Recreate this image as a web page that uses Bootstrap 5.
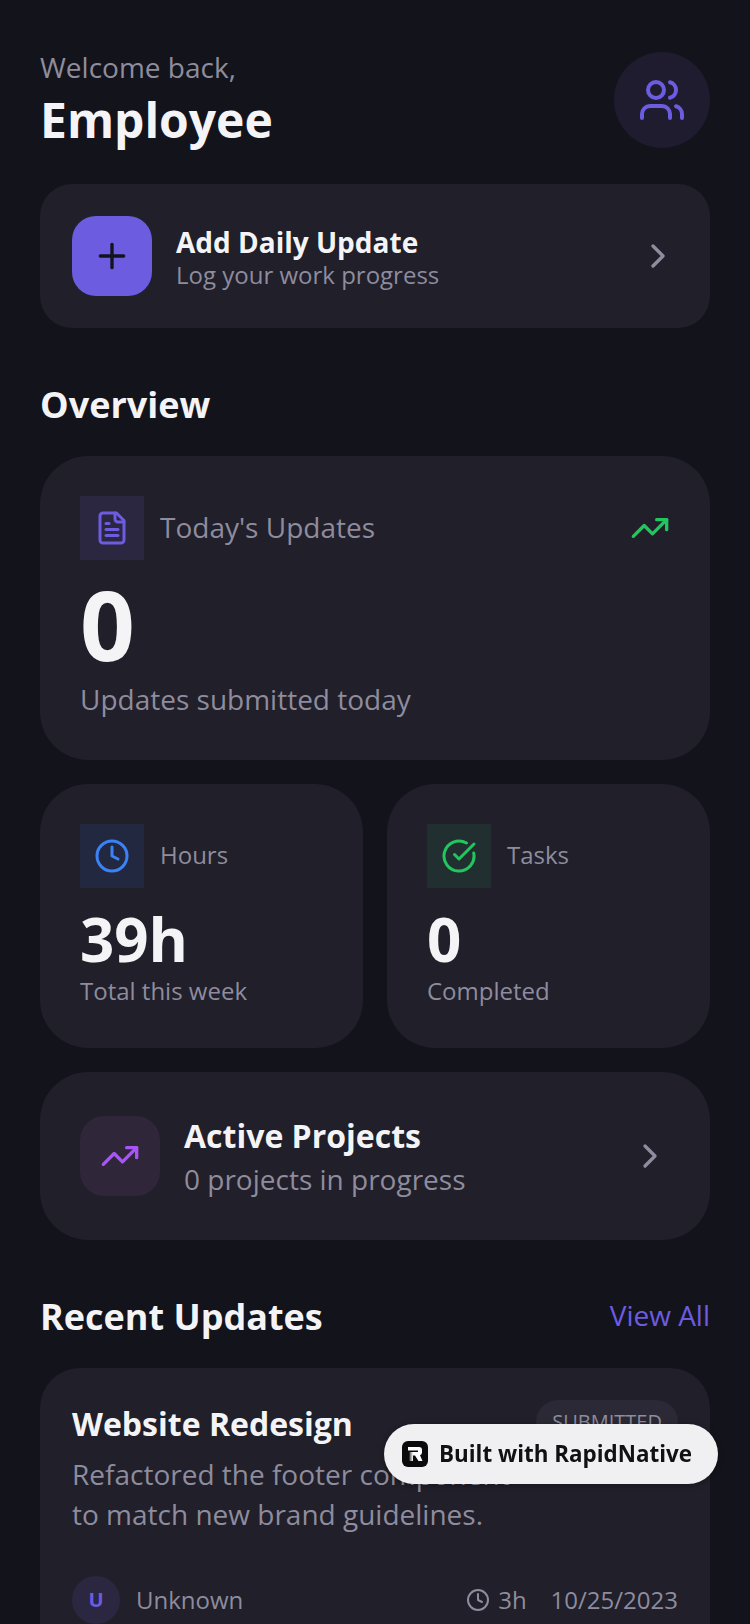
<!DOCTYPE html>
<html lang="en">
<head>
  <meta charset="UTF-8" />
  <meta name="viewport" content="width=device-width, initial-scale=1.0" />
  <title>Dashboard</title>
  <link href="https://cdn.jsdelivr.net/npm/bootstrap@5.3.3/dist/css/bootstrap.min.css" rel="stylesheet">
  <style>
    html, body {
      height: 1624px;
      overflow: hidden;
      background: #13131c;
      font-family: "Open Sans", "Noto Sans", sans-serif;
      color: #f4f4f6;
    }
    .screen { padding: 52px 40px 0; }
    .muted-txt { color: #8e8c9d; }
    .hello { font-size: 28px; line-height: 30px; }
    .who { font-size: 48px; line-height: 60px; font-weight: 700; margin: 8px 0 0; }
    .avatar { width: 96px; height: 96px; background: #1e1c2e; border-radius: 50%; }
    .panel { background: #201f2a; }
    .add-card { margin-top: 34px; height: 144px; padding: 0 32px; border-radius: 32px; }
    .add-btn { width: 80px; height: 80px; background: #6c5ce0; border-radius: 24px; }
    .add-text { padding-top: 4px; }
    .add-title { font-size: 28px; line-height: 34px; font-weight: 700; }
    .add-sub { font-size: 24px; line-height: 32px; }
    .sect-title { font-size: 36px; line-height: 44px; font-weight: 700; margin: 0; }
    .overview-title { margin-top: 55px; margin-bottom: 29px; }
    .main-stat { height: 304px; padding: 40px; border-radius: 48px; }
    .ico-box { width: 64px; height: 64px; }
    .ico-purple { background: #2b2740; }
    .ico-blue { background: #212840; }
    .ico-green { background: #212f30; }
    .stat-label { font-size: 28px; line-height: 36px; padding-bottom: 2px; }
    .stat-label-sm { font-size: 24px; line-height: 32px; padding-bottom: 2px; }
    .big-num { font-size: 96px; line-height: 104px; font-weight: 700; margin-top: 12px; }
    .stat-foot { font-size: 28px; line-height: 36px; margin-top: 5px; }
    .stat-row { margin-top: 24px; gap: 24px; }
    .small-stat { height: 264px; padding: 40px; border-radius: 48px; flex: 1 1 0; }
    .hours-stat { flex: 0 0 323px; }
    .mid-num { font-size: 60px; line-height: 68px; font-weight: 700; margin-top: 17px; }
    .small-foot { font-size: 24px; line-height: 32px; margin-top: 2px; }
    .proj-card { margin-top: 24px; height: 168px; padding: 0 40px; border-radius: 48px; }
    .proj-ico { width: 80px; height: 80px; background: #2f2639; border-radius: 24px; }
    .proj-text { padding-top: 2px; }
    .proj-title { font-size: 32px; line-height: 40px; font-weight: 700; }
    .proj-sub { font-size: 28px; line-height: 40px; margin-top: 3px; }
    .recent-head { margin-top: 54px; margin-bottom: 28px; }
    .view-all { color: #6c5ce0; font-size: 28px; text-decoration: none; margin-bottom: 4px; }
    .update-card { padding: 32px; border-radius: 40px; height: 400px; }
    .upd-title { font-size: 32px; line-height: 44px; font-weight: 700; margin: 2px 0 0; }
    .status-pill { background: #2a2935; color: #8e8c9d; font-size: 20px; line-height: 28px; padding: 8px 16px; border-radius: 24px; }
    .upd-text { font-size: 28px; line-height: 40px; margin-top: 8px; }
    .u-badge { width: 48px; height: 48px; border-radius: 50%; background: #2b2740; color: #6c5ce0; font-size: 20px; font-weight: 700; }
    .upd-meta { font-size: 24px; margin-top: 42px; }
    .built-pill {
      position: fixed; left: 384px; top: 1424px; width: 334px; height: 60px;
      padding-left: 18px; gap: 11px;
      background: #f0f0f2; border-radius: 30px; color: #111;
      font-size: 22.4px; font-weight: 700; box-shadow: 0 1px 6px rgba(0,0,0,.3);
    }
    .built-logo { width: 26px; height: 26px; background: #0b0b0b; border-radius: 6px; }
  </style>
</head>
<body>
  <div class="screen">
    <!-- header -->
    <div class="d-flex justify-content-between align-items-start">
      <div>
        <div class="hello muted-txt">Welcome back,</div>
        <h1 class="who">Employee</h1>
      </div>
      <div class="avatar d-flex align-items-center justify-content-center">
        <svg width="48" height="48" viewBox="0 0 24 24" fill="none" stroke="#6c5ce0" stroke-width="2" stroke-linecap="round" stroke-linejoin="round"><path d="M16 21v-2a4 4 0 0 0-4-4H6a4 4 0 0 0-4 4v2"/><circle cx="9" cy="7" r="4"/><path d="M22 21v-2a4 4 0 0 0-3-3.87"/><path d="M16 3.13a4 4 0 0 1 0 7.75"/></svg>
      </div>
    </div>

    <div class="panel add-card d-flex align-items-center">
      <div class="add-btn d-flex align-items-center justify-content-center">
        <svg width="40" height="40" viewBox="0 0 24 24" fill="none" stroke="#13131c" stroke-width="2" stroke-linecap="round"><path d="M5 12h14"/><path d="M12 5v14"/></svg>
      </div>
      <div class="add-text flex-grow-1 ms-4">
        <div class="add-title">Add Daily Update</div>
        <div class="add-sub muted-txt">Log your work progress</div>
      </div>
      <svg width="40" height="40" viewBox="0 0 24 24" fill="none" stroke="#8e8c9d" stroke-width="2" stroke-linecap="round" stroke-linejoin="round"><path d="m9 18 6-6-6-6"/></svg>
    </div>

    <h2 class="sect-title overview-title">Overview</h2>

    <div class="panel main-stat">
      <div class="d-flex align-items-center">
        <div class="ico-box ico-purple d-flex align-items-center justify-content-center">
          <svg width="36" height="36" viewBox="0 0 24 24" fill="none" stroke="#6c5ce0" stroke-width="2" stroke-linecap="round" stroke-linejoin="round"><path d="M15 2H6a2 2 0 0 0-2 2v16a2 2 0 0 0 2 2h12a2 2 0 0 0 2-2V7Z"/><path d="M14 2v4a2 2 0 0 0 2 2h4"/><path d="M10 9H8"/><path d="M16 13H8"/><path d="M16 17H8"/></svg>
        </div>
        <div class="stat-label muted-txt flex-grow-1 ms-3">Today's Updates</div>
        <svg width="40" height="40" viewBox="0 0 24 24" fill="none" stroke="#22c55e" stroke-width="2" stroke-linecap="round" stroke-linejoin="round"><path d="M22 7 13.5 15.5l-5-5L2 17"/><path d="M16 7h6v6"/></svg>
      </div>
      <div class="big-num">0</div>
      <div class="stat-foot muted-txt">Updates submitted today</div>
    </div>

    <div class="d-flex stat-row">
      <div class="panel small-stat hours-stat">
        <div class="d-flex align-items-center">
          <div class="ico-box ico-blue d-flex align-items-center justify-content-center">
            <svg width="36" height="36" viewBox="0 0 24 24" fill="none" stroke="#3b82f6" stroke-width="2" stroke-linecap="round" stroke-linejoin="round"><circle cx="12" cy="12" r="10"/><path d="M12 6v6l4 2"/></svg>
          </div>
          <div class="stat-label-sm muted-txt ms-3">Hours</div>
        </div>
        <div class="mid-num">39h</div>
        <div class="small-foot muted-txt">Total this week</div>
      </div>
      <div class="panel small-stat">
        <div class="d-flex align-items-center">
          <div class="ico-box ico-green d-flex align-items-center justify-content-center">
            <svg width="36" height="36" viewBox="0 0 24 24" fill="none" stroke="#22c55e" stroke-width="2" stroke-linecap="round" stroke-linejoin="round"><path d="M21.8 10A10 10 0 1 1 17 3.34"/><path d="m9 11 3 3L22 4"/></svg>
          </div>
          <div class="stat-label-sm muted-txt ms-3">Tasks</div>
        </div>
        <div class="mid-num">0</div>
        <div class="small-foot muted-txt">Completed</div>
      </div>
    </div>

    <div class="panel proj-card d-flex align-items-center">
      <div class="proj-ico d-flex align-items-center justify-content-center">
        <svg width="40" height="40" viewBox="0 0 24 24" fill="none" stroke="#a855f7" stroke-width="2" stroke-linecap="round" stroke-linejoin="round"><path d="M22 7 13.5 15.5l-5-5L2 17"/><path d="M16 7h6v6"/></svg>
      </div>
      <div class="proj-text flex-grow-1 ms-4">
        <div class="proj-title">Active Projects</div>
        <div class="proj-sub muted-txt">0 projects in progress</div>
      </div>
      <svg width="40" height="40" viewBox="0 0 24 24" fill="none" stroke="#8e8c9d" stroke-width="2" stroke-linecap="round" stroke-linejoin="round"><path d="m9 18 6-6-6-6"/></svg>
    </div>

    <div class="d-flex justify-content-between align-items-center recent-head">
      <h2 class="sect-title">Recent Updates</h2>
      <a class="view-all" href="#">View All</a>
    </div>

    <div class="panel update-card">
      <div class="d-flex justify-content-between align-items-start">
        <h3 class="upd-title">Website Redesign</h3>
        <span class="status-pill">SUBMITTED</span>
      </div>
      <div class="upd-text muted-txt">Refactored the footer component<br>to match new brand guidelines.</div>
      <div class="d-flex justify-content-between align-items-center upd-meta muted-txt">
        <div class="d-flex align-items-center gap-3">
          <div class="u-badge d-flex align-items-center justify-content-center">U</div>
          <span>Unknown</span>
        </div>
        <div class="d-flex align-items-center">
          <svg class="me-2" width="24" height="24" viewBox="0 0 24 24" fill="none" stroke="#8e8c9d" stroke-width="2" stroke-linecap="round" stroke-linejoin="round"><circle cx="12" cy="12" r="10"/><path d="M12 6v6l4 2"/></svg>
          <span>3h</span>
          <span class="ms-4">10/25/2023</span>
        </div>
      </div>
    </div>
  </div>

  <div class="built-pill d-flex align-items-center">
    <div class="built-logo d-flex align-items-center justify-content-center">
      <svg width="18" height="18" viewBox="0 0 18 18">
        <defs><linearGradient id="rFade" x1="0" x2="1" y1="0" y2="0"><stop offset="0" stop-color="#555"/><stop offset="1" stop-color="#fff"/></linearGradient></defs>
        <path fill="#fff" d="M2 2h11a3 3 0 0 1 3 3v2.5a3 3 0 0 1-2 2.8l2.5 5.7h-4L9 10.5H7V7h5V5.5H2z"/>
        <path fill="url(#rFade)" d="M3.5 7H7v9H3.5z"/>
      </svg>
    </div>
    <span>Built with RapidNative</span>
  </div>

  <script src="https://cdn.jsdelivr.net/npm/bootstrap@5.3.3/dist/js/bootstrap.bundle.min.js"></script>
</body>
</html>
